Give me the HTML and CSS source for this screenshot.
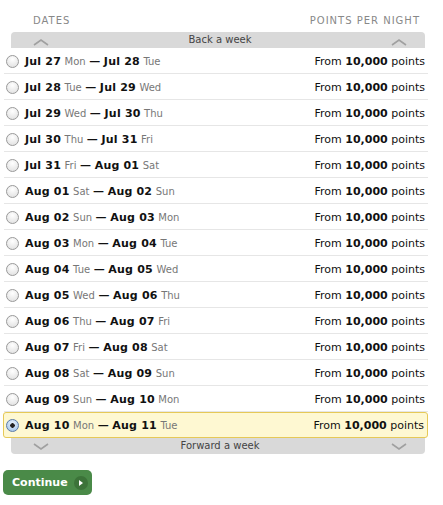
FILE: index.html
```html
<!DOCTYPE html>
<html lang="en">
<head>
  <meta charset="UTF-8">
  <title>Select dates</title>
  <link rel="stylesheet" href="styles.css">
</head>
<body>
  <div class="picker">
    <div class="picker-head">
      <span>Dates</span>
      <span>Points per night</span>
    </div>

    <div class="week-bar week-back">
      <svg class="chev" width="16" height="7" viewBox="0 0 16 7"><polyline points="1,6 8,1 15,6"/></svg>
      <span>Back a week</span>
      <svg class="chev" width="16" height="7" viewBox="0 0 16 7"><polyline points="1,6 8,1 15,6"/></svg>
    </div>

    <ul class="date-list">
      <li class="date-row"><span class="radio"></span><span class="dates"><b>Jul 27</b> <i>Mon</i> <b>—</b> <b>Jul 28</b> <i>Tue</i></span><span class="price">From <b>10,000</b> points</span></li>
      <li class="date-row"><span class="radio"></span><span class="dates"><b>Jul 28</b> <i>Tue</i> <b>—</b> <b>Jul 29</b> <i>Wed</i></span><span class="price">From <b>10,000</b> points</span></li>
      <li class="date-row"><span class="radio"></span><span class="dates"><b>Jul 29</b> <i>Wed</i> <b>—</b> <b>Jul 30</b> <i>Thu</i></span><span class="price">From <b>10,000</b> points</span></li>
      <li class="date-row"><span class="radio"></span><span class="dates"><b>Jul 30</b> <i>Thu</i> <b>—</b> <b>Jul 31</b> <i>Fri</i></span><span class="price">From <b>10,000</b> points</span></li>
      <li class="date-row"><span class="radio"></span><span class="dates"><b>Jul 31</b> <i>Fri</i> <b>—</b> <b>Aug 01</b> <i>Sat</i></span><span class="price">From <b>10,000</b> points</span></li>
      <li class="date-row"><span class="radio"></span><span class="dates"><b>Aug 01</b> <i>Sat</i> <b>—</b> <b>Aug 02</b> <i>Sun</i></span><span class="price">From <b>10,000</b> points</span></li>
      <li class="date-row"><span class="radio"></span><span class="dates"><b>Aug 02</b> <i>Sun</i> <b>—</b> <b>Aug 03</b> <i>Mon</i></span><span class="price">From <b>10,000</b> points</span></li>
      <li class="date-row"><span class="radio"></span><span class="dates"><b>Aug 03</b> <i>Mon</i> <b>—</b> <b>Aug 04</b> <i>Tue</i></span><span class="price">From <b>10,000</b> points</span></li>
      <li class="date-row"><span class="radio"></span><span class="dates"><b>Aug 04</b> <i>Tue</i> <b>—</b> <b>Aug 05</b> <i>Wed</i></span><span class="price">From <b>10,000</b> points</span></li>
      <li class="date-row"><span class="radio"></span><span class="dates"><b>Aug 05</b> <i>Wed</i> <b>—</b> <b>Aug 06</b> <i>Thu</i></span><span class="price">From <b>10,000</b> points</span></li>
      <li class="date-row"><span class="radio"></span><span class="dates"><b>Aug 06</b> <i>Thu</i> <b>—</b> <b>Aug 07</b> <i>Fri</i></span><span class="price">From <b>10,000</b> points</span></li>
      <li class="date-row"><span class="radio"></span><span class="dates"><b>Aug 07</b> <i>Fri</i> <b>—</b> <b>Aug 08</b> <i>Sat</i></span><span class="price">From <b>10,000</b> points</span></li>
      <li class="date-row"><span class="radio"></span><span class="dates"><b>Aug 08</b> <i>Sat</i> <b>—</b> <b>Aug 09</b> <i>Sun</i></span><span class="price">From <b>10,000</b> points</span></li>
      <li class="date-row"><span class="radio"></span><span class="dates"><b>Aug 09</b> <i>Sun</i> <b>—</b> <b>Aug 10</b> <i>Mon</i></span><span class="price">From <b>10,000</b> points</span></li>
      <li class="date-row selected"><span class="radio"></span><span class="dates"><b>Aug 10</b> <i>Mon</i> <b>—</b> <b>Aug 11</b> <i>Tue</i></span><span class="price">From <b>10,000</b> points</span></li>
    </ul>

    <div class="week-bar week-forward">
      <svg class="chev" width="16" height="7" viewBox="0 0 16 7"><polyline points="1,1 8,6 15,1"/></svg>
      <span>Forward a week</span>
      <svg class="chev" width="16" height="7" viewBox="0 0 16 7"><polyline points="1,1 8,6 15,1"/></svg>
    </div>
  </div>

  <button class="continue-btn">Continue <span class="btn-arrow"></span></button>
</body>
</html>
```

FILE: styles.css
```css
:root {
  --text: #111;
  --muted: #777;
  --bar: #d9d9d9;
  --line: #e6e6e6;
  --green: #4a8a48;
}

* {
  margin: 0;
  padding: 0;
  box-sizing: border-box;
}

body {
  font-family: "DejaVu Sans", Verdana, sans-serif;
  font-size: 11px;
  color: var(--text);
  background: #fff;
  padding: 12px 0 0 3px;
}

.picker {
  width: 425px;
}

.picker-head {
  display: flex;
  justify-content: space-between;
  padding: 3px 8px 0 30px;
  height: 20px;
  font-size: 10px;
  line-height: 12px;
  letter-spacing: 1px;
  text-transform: uppercase;
  color: #888;
}

.week-bar {
  display: flex;
  justify-content: space-between;
  margin: 0 3px 0 8px;
  height: 16px;
  padding: 0 18px 0 22px;
  background: var(--bar);
  font-size: 10px;
  color: #444;
  line-height: 16px;
}

.week-back {
  border-radius: 4px 4px 0 0;
  align-items: flex-start;
}

.week-back .chev {
  margin-top: 7px;
}

.week-forward {
  border-radius: 0 0 4px 4px;
  align-items: flex-start;
}

.week-forward .chev {
  margin-top: 5px;
}

.chev polyline {
  fill: none;
  stroke: #a0a0a0;
  stroke-width: 1.6;
}

.date-list {
  list-style: none;
}

.date-row {
  display: flex;
  align-items: center;
  height: 26px;
  padding: 1px 3px 0 2px;
  border-bottom: 1px solid var(--line);
  margin-left: 1px;
}

.date-row.selected {
  margin-left: 0;
  padding-left: 2px;
  background: #fef8d2;
  border: 1px solid #e6c957;
  border-radius: 3px;
}

.radio {
  width: 13px;
  height: 13px;
  border-radius: 50%;
  border: 1px solid #999;
  background: radial-gradient(circle at 50% 30%, #fff, #ddd);
  margin-right: 6px;
  flex: none;
}

.selected .radio {
  border-color: #5a7aa8;
  background: radial-gradient(circle, #222 0 2px, transparent 2.5px), radial-gradient(circle at 50% 30%, #e6f0fb, #9cc0e8);
}

.dates {
  flex: 1;
}

.dates b {
  font-weight: bold;
  letter-spacing: 0.2px;
}

.price b {
  font-weight: bold;
}

.dates i {
  font-style: normal;
  font-size: 10px;
  color: var(--muted);
}

.continue-btn {
  display: inline-flex;
  align-items: center;
  gap: 6px;
  margin-top: 16px;
  height: 25px;
  padding: 0 4px 0 9px;
  border: none;
  border-radius: 5px;
  background: var(--green);
  color: #fff;
  font-family: "DejaVu Sans", Verdana, sans-serif;
  font-size: 11px;
  font-weight: bold;
}

.btn-arrow {
  position: relative;
  width: 14px;
  height: 14px;
  border-radius: 50%;
  background: #3c7339;
}

.btn-arrow::after {
  content: "";
  position: absolute;
  left: 5px;
  top: 4px;
  border-left: 4px solid #fff;
  border-top: 3px solid transparent;
  border-bottom: 3px solid transparent;
}
```
